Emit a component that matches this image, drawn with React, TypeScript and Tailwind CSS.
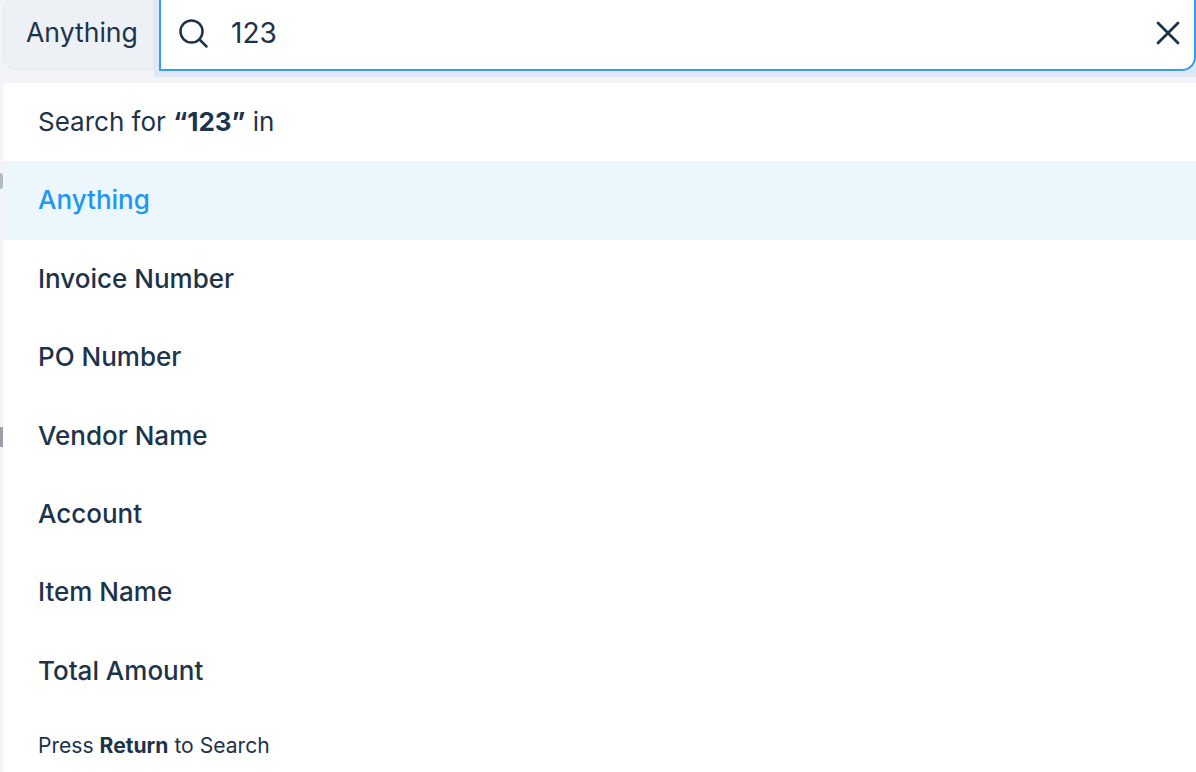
const OPTIONS = ['Invoice Number', 'PO Number', 'Vendor Name', 'Account', 'Item Name', 'Total Amount'];

export default function App() {
  return (
    <div className="relative h-[772px] w-[1196px] overflow-hidden bg-[#f3f3f8] font-['Inter',sans-serif] text-[#1c334a]">
      {/* bits of the page behind the dropdown, left edge */}
      <div className="absolute left-0 top-[173px] h-[16px] w-[3px] rounded-r-full bg-[#b4b8bf]" />
      <div className="absolute left-0 top-[427px] h-[20px] w-[3px] bg-[#9aa0a8]" />

      {/* search bar */}
      <div className="flex h-[83px] items-start pl-[3px]">
        <div className="-mt-[4px] flex h-[74px] w-[151px] items-center rounded-l-[14px] border border-[#e3e8f1] bg-[#edf0f5] pl-[22px] text-[26.6px]">
          Anything
        </div>
        <div className="-mt-[8px] h-[85px] flex-1 bg-[#dfe8f6]">
          <div className="ml-[5px] flex h-[79px] items-center rounded-br-[14px] border-b-2 border-l-2 border-r-2 border-[#3a9bf0] bg-white pt-[5px]">
            <svg width="32" height="32" viewBox="0 0 32 32" fill="none" stroke="#1c334a" strokeWidth="2.5" strokeLinecap="round" className="ml-[16px]">
              <circle cx="14.5" cy="14.5" r="11" />
              <path d="M22.5 22.5 L29.5 29.5" />
            </svg>
            <span className="ml-[22px] text-[28px]">123</span>
            <svg width="26" height="26" viewBox="0 0 26 26" fill="none" stroke="#1c334a" strokeWidth="2.8" strokeLinecap="round" className="ml-auto mr-[13px]">
              <path d="M3 3 L23 23 M23 3 L3 23" />
            </svg>
          </div>
        </div>
      </div>

      {/* dropdown */}
      <div className="ml-[3px] rounded-tl-[4px] bg-white text-[26px]">
        <div className="flex h-[78px] items-center pb-[2px] pl-[35px]">
          <span>
            Search for <b className="font-bold">“123”</b> in
          </span>
        </div>
        <div className="flex h-[78.5px] items-center bg-[#ebf7fd] pb-[2px] pl-[35px] font-[450] text-[#2196f3]">Anything</div>
        {OPTIONS.map((option) => (
          <div key={option} className="flex h-[78.3px] items-center pl-[35px] font-[450]">
            {option}
          </div>
        ))}
        <div className="flex h-[72px] items-center pl-[35px] pt-[2px] text-[21.1px]">
          <span>
            Press <b className="font-bold">Return</b> to Search
          </span>
        </div>
      </div>
    </div>
  );
}
